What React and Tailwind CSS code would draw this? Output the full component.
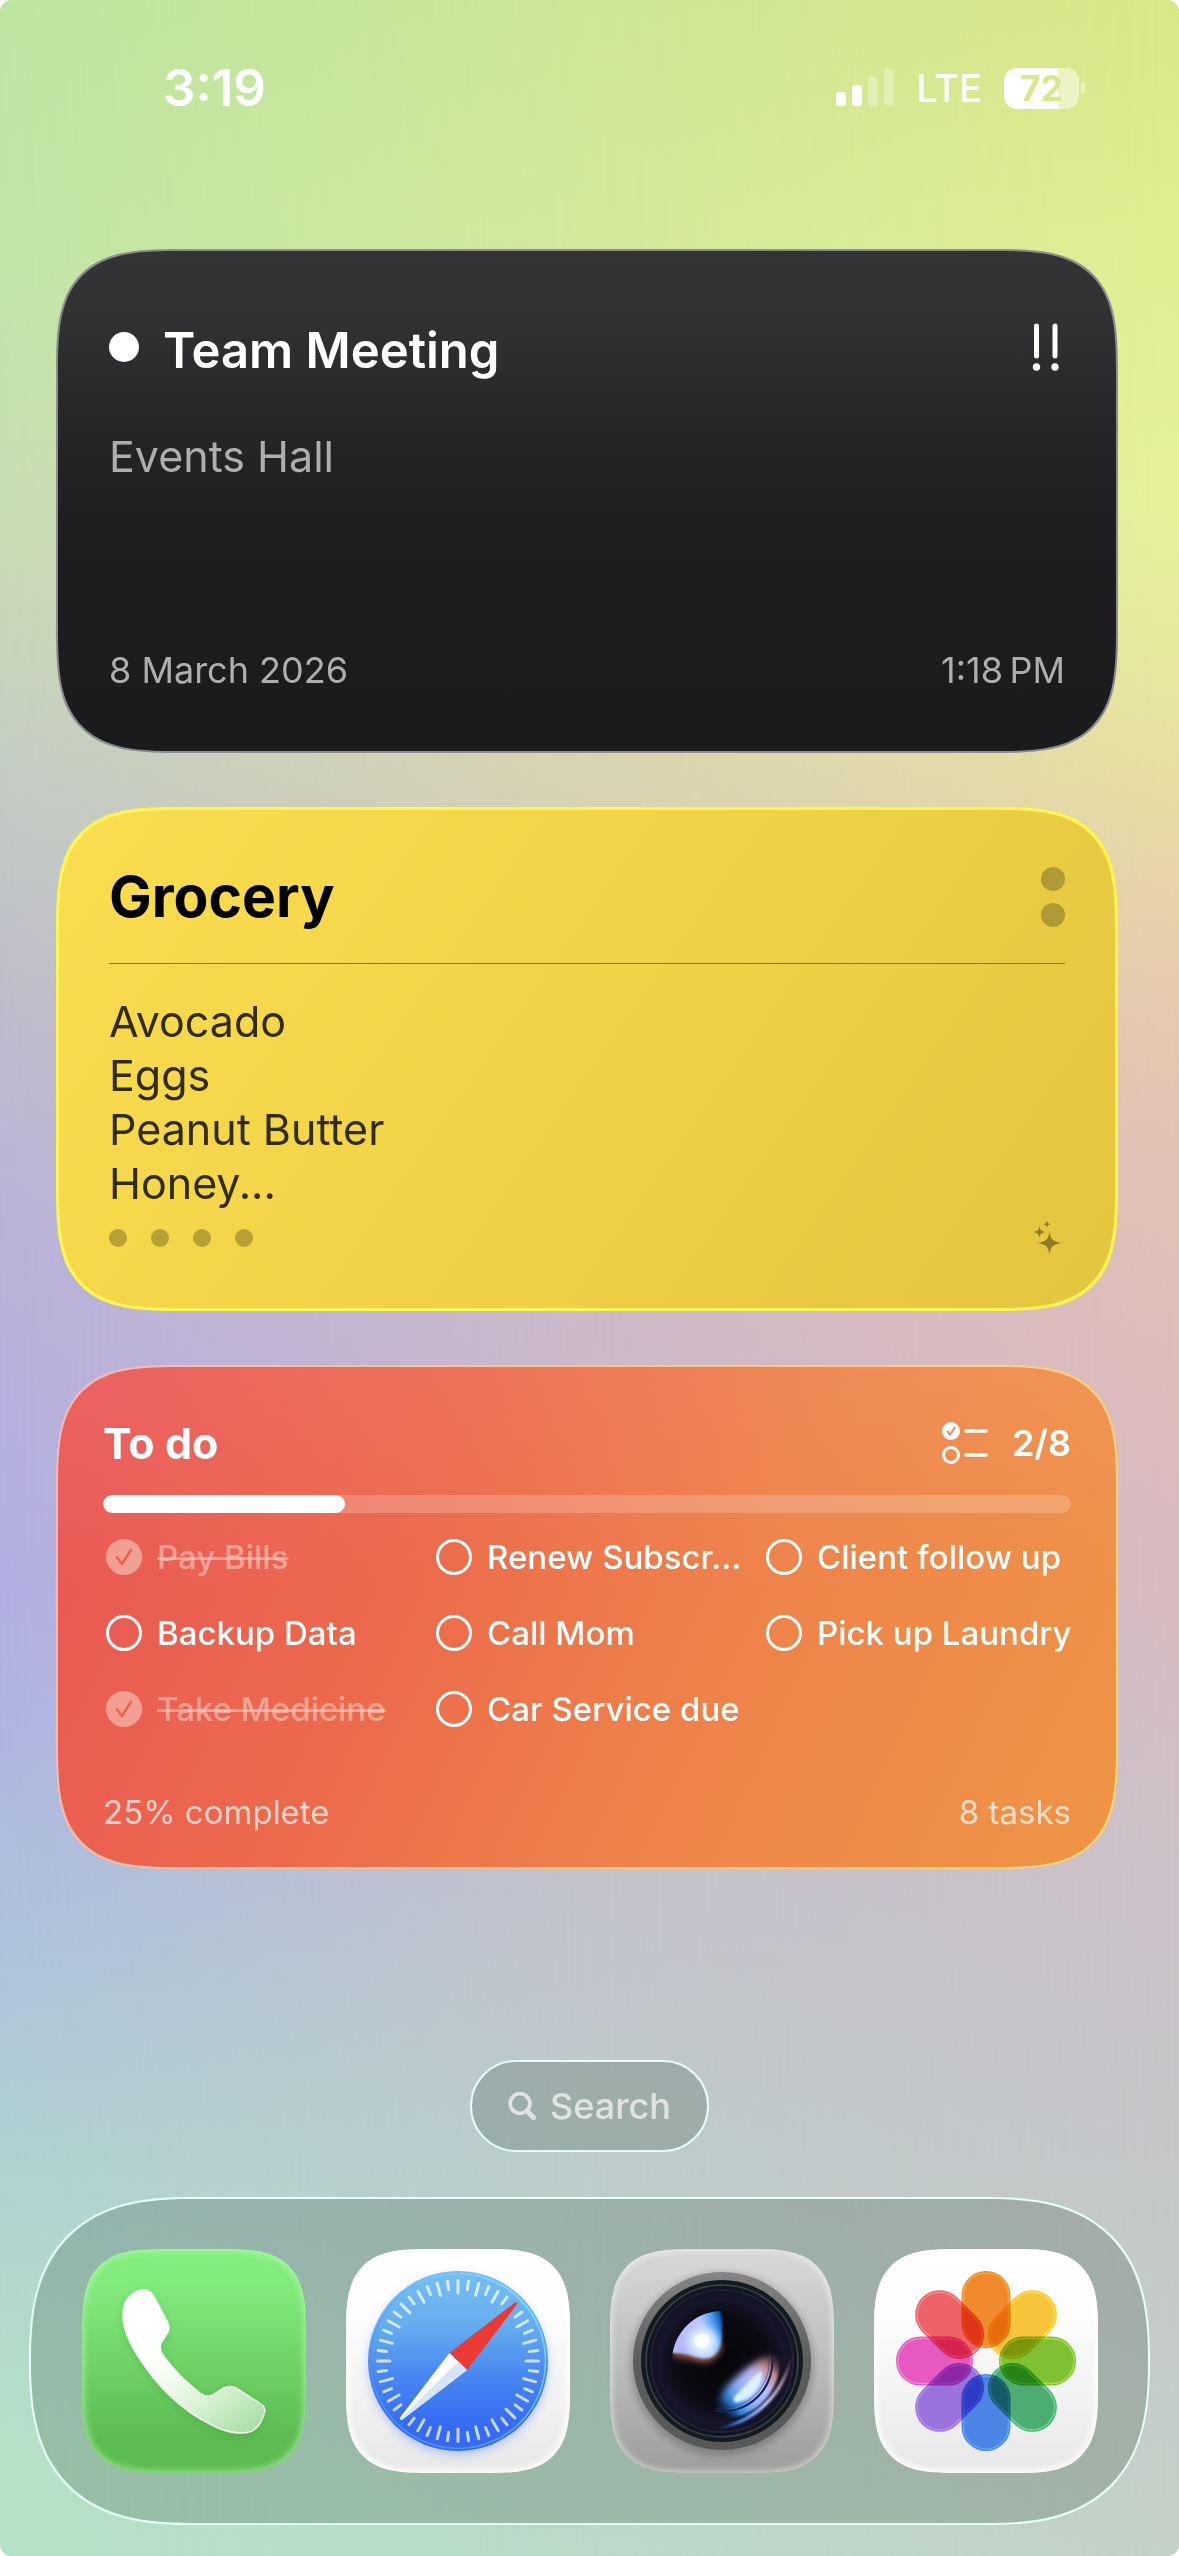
import { useState } from "react";
import clsx from "clsx";

const TASKS = [
  { id: 1, title: "Pay Bills", done: true },
  { id: 2, title: "Renew Subscr...", done: false },
  { id: 3, title: "Client follow up", done: false },
  { id: 4, title: "Backup Data", done: false },
  { id: 5, title: "Call Mom", done: false },
  { id: 6, title: "Pick up Laundry", done: false },
  { id: 7, title: "Take Medicine", done: true },
  { id: 8, title: "Car Service due", done: false },
];

const GROCERIES = ["Avocado", "Eggs", "Peanut Butter", "Honey..."];

const PETALS = [
  { angle: 0, fill: "#F08A2C", edge: "#F5A93F" },
  { angle: 45, fill: "#F6C53B", edge: "#FFE03A" },
  { angle: 90, fill: "#7FC133", edge: "#A2E044" },
  { angle: 135, fill: "#4DAC72", edge: "#6FD79B" },
  { angle: 180, fill: "#4A85E6", edge: "#5FA2F5" },
  { angle: 225, fill: "#9A72DC", edge: "#B58CF0" },
  { angle: 270, fill: "#E65ABF", edge: "#F083D6" },
  { angle: 315, fill: "#EE6266", edge: "#F58A90" },
];

const TICKS = Array.from({ length: 48 }, (_, i) => i).filter(
  (i) => i !== 6 && i !== 30
);

function Wallpaper() {
  return (
    <div className="absolute inset-0 -z-10" aria-hidden="true">
      <div className="absolute inset-0 bg-[linear-gradient(180deg,#cde796_0%,#d3ea9b_9%,#dbe6a2_18%,#d9d4b2_30%,#d4c5bd_42%,#cdb9c9_52%,#c8bccb_63%,#c3c3cc_74%,#bdcdcb_85%,#bbdbc8_100%)]" />
      <div className="absolute inset-0 bg-[linear-gradient(180deg,#bde4a2_0%,#c1e5a7_10%,#c5e0ae_16%,#c8d8b8_23%,#c3cdc3_30%,#bebccb_39%,#bab3d7_47%,#b6b0dd_54%,#b0aee1_62%,#aeb6e0_68%,#adc1dc_75%,#b0d2d1_85%,#b5e1c6_96%,#b5e1c6_100%)] [mask-image:linear-gradient(90deg,#000_0%,transparent_50%)]" />
      <div className="absolute inset-0 bg-[linear-gradient(180deg,#dae789_0%,#e1ee92_10%,#e6f199_20%,#e7ea9d_25%,#e8dca4_31%,#e6ccac_38%,#e3c1b5_45%,#dfbcba_53%,#d8babf_61%,#ccc1c8_73%,#c5c6c8_84%,#c4d1c8_100%)] [mask-image:linear-gradient(90deg,transparent_50%,#000_100%)]" />
    </div>
  );
}

function StatusBar() {
  return (
    <header className="flex items-center justify-between pt-15 pr-[94px] pl-[163px] text-white">
      <time className="text-[51px] leading-14 font-semibold">3:19</time>
      <div className="flex items-center gap-[22px]">
        <svg width="58" height="38" viewBox="0 0 58 38" fill="#fff" role="img" aria-label="Signal">
          <rect x="0" y="23" width="10" height="14" rx="3" />
          <rect x="16" y="16" width="10" height="21" rx="3" />
          <rect x="32" y="8" width="10" height="29" rx="3" opacity="0.3" />
          <rect x="48" y="0" width="10" height="37" rx="3" opacity="0.3" />
        </svg>
        <span className="text-[38px] leading-12 font-medium">LTE</span>
        <div className="flex items-center gap-[2px]">
          <div className="flex h-[41px] w-[75px] items-center justify-center overflow-hidden rounded-[13px] bg-[linear-gradient(90deg,#fff_72%,#edf3c4_72%)]">
            <span className="text-[35px] leading-10 font-bold text-[#d8e68c]">72</span>
          </div>
          <div className="h-3 w-1 rounded-r-full bg-[#edf3c4]" />
        </div>
      </div>
    </header>
  );
}

function EventWidget() {
  return (
    <article className="flex min-h-[504px] flex-col rounded-[126px] border-2 border-[#8d8d90] bg-[linear-gradient(180deg,#343436_0%,#323234_12%,#262628_35%,#1e1e20_55%,#1b1b1d_100%)] px-[51px] pt-[70px] pb-[59px] [corner-shape:superellipse(1.65)]">
      <div className="flex items-center justify-between">
        <div className="flex items-center gap-6">
          <span className="mb-2 size-[30px] rounded-full bg-white" />
          <h2 className="text-[49px] leading-15 font-semibold text-white">Team Meeting</h2>
        </div>
        <svg
          className="mb-2"
          width="36"
          height="50"
          viewBox="0 0 36 50"
          role="img"
          aria-label="High priority"
        >
          <g stroke="#fff" strokeWidth="5" strokeLinecap="round">
            <path d="M7.500 4V34M26 4V34" />
          </g>
          <circle cx="7.500" cy="45" r="3.700" fill="#fff" />
          <circle cx="26" cy="45" r="3.700" fill="#fff" />
        </svg>
      </div>
      <p className="mt-12 text-[43px] leading-[54px] text-[#aeaeae]">Events Hall</p>
      <div className="mt-auto flex justify-between text-[36px] leading-11 text-[#aeaeae]">
        <span>8 March 2026</span>
        <time>1:18{"\u202f"}PM</time>
      </div>
    </article>
  );
}

function NotesWidget() {
  return (
    <article className="flex min-h-[504px] flex-col rounded-[126px] border-3 border-[#fdf651] bg-[linear-gradient(125deg,#fade50_0%,#efd245_50%,#e3c53f_100%)] px-[50px] pt-[51px] pb-[52px] [corner-shape:superellipse(1.65)]">
      <div className="flex items-center justify-between">
        <h2 className="text-[57px] leading-18 font-bold text-black">Grocery</h2>
        <div className="flex flex-col gap-3">
          <span className="size-6 rounded-full bg-[#b09a35]" />
          <span className="size-6 rounded-full bg-[#b09a35]" />
        </div>
      </div>
      <hr className="mt-[30px] border-t border-[#7b7341]" />
      <ul className="mt-[30px] text-[43px] leading-[54px] text-[#322b0a]">
        {GROCERIES.map((item) => (
          <li key={item}>{item}</li>
        ))}
      </ul>
      <div className="mt-auto flex h-9 items-center justify-between">
        <div className="flex gap-6">
          {[0, 1, 2, 3].map((dot) => (
            <span key={dot} className="size-[18px] rounded-full bg-[#b8a033]" />
          ))}
        </div>
        <svg width="32" height="36" viewBox="0 0 32 36" fill="#8d7a26" aria-hidden="true">
          <path d="M16.500 11C17.500 19 19.500 21.500 28.500 23C19.500 24.500 17.500 27 16.500 35C15.500 27 13.500 24.500 4.500 23C13.500 21.500 15.500 19 16.500 11Z" />
          <path d="M6.500 6C7 10 8 11 12.500 12C8 13 7 14 6.500 18C6 14 5 13 0.500 12C5 11 6 10 6.500 6Z" />
          <path d="M14 0.500C14.300 3 15 3.700 17.800 4.200C15 4.700 14.300 5.400 14 8C13.700 5.400 13 4.700 10.200 4.200C13 3.700 13.700 3 14 0.500Z" />
        </svg>
      </div>
    </article>
  );
}

function TaskItem({ task, onToggle }) {
  return (
    <li>
      <label
        className={clsx(
          "flex items-center gap-[15px] pl-[3px] text-[33px] leading-9 font-medium whitespace-nowrap",
          task.done ? "text-white/40 line-through decoration-3" : "text-white"
        )}
      >
        <span className="grid shrink-0 place-items-center">
          <input
            type="checkbox"
            checked={task.done}
            onChange={() => onToggle(task.id)}
            className="col-start-1 row-start-1 size-9 appearance-none rounded-full border-3 border-white checked:border-transparent checked:bg-[#f29f92] checked:bg-origin-border"
          />
          {task.done && (
            <svg
              className="pointer-events-none col-start-1 row-start-1"
              width="18"
              height="18"
              viewBox="0 0 18 18"
              fill="none"
              stroke="#ea6353"
              strokeWidth="2.600"
              strokeLinecap="round"
              strokeLinejoin="round"
            >
              <path d="M2 9.500L7 16L16 2" />
            </svg>
          )}
        </span>
        <span>{task.title}</span>
      </label>
    </li>
  );
}

function TodoWidget() {
  const [tasks, setTasks] = useState(TASKS);
  const done = tasks.filter((t) => t.done).length;
  const percent = Math.round((done / tasks.length) * 100);

  const toggle = (id) =>
    setTasks((prev) => prev.map((t) => (t.id === id ? { ...t, done: !t.done } : t)));

  return (
    <article className="flex min-h-[504px] flex-col rounded-[126px] border-2 border-transparent [background:linear-gradient(180deg,rgba(255,255,255,0.07),transparent_45%)_padding-box,linear-gradient(115deg,#ea5855_5%,#ec6a4b_35%,#ee834a_62%,#ef9545_100%)_padding-box,linear-gradient(110deg,#f6b9b8,#f8c68c_50%,#fbd878)_border-box] px-[45px] pt-[50px] pb-[35px] [corner-shape:superellipse(1.65)]">
      <div className="flex items-center justify-between text-white">
        <h2 className="text-[43px] leading-13 font-bold">To do</h2>
        <div className="flex items-center gap-6">
          <svg width="46" height="42" viewBox="0 0 46 42" fill="none" aria-hidden="true">
            <circle cx="9" cy="9" r="9" fill="#fff" />
            <path
              d="M5.500 9.500L8 12.800L12.800 5.500"
              stroke="#EF8E57"
              strokeWidth="2"
              strokeLinecap="round"
              strokeLinejoin="round"
            />
            <circle cx="9" cy="33" r="7.500" stroke="#fff" strokeWidth="3" />
            <path d="M24 9H44M24 33H44" stroke="#fff" strokeWidth="3.400" strokeLinecap="round" />
          </svg>
          <span className="text-[36px] leading-11 font-semibold">
            {done}/{tasks.length}
          </span>
        </div>
      </div>

      <div
        role="progressbar"
        aria-label="Tasks done"
        aria-valuenow={percent}
        className="mt-[26px] h-[18px] overflow-hidden rounded-full bg-white/20"
      >
        <div className="h-full rounded-full bg-white" style={{ width: `${percent}%` }} />
      </div>

      <ul className="mt-[26px] grid grid-cols-3 gap-x-[22px] gap-y-10">
        {tasks.map((task) => (
          <TaskItem key={task.id} task={task} onToggle={toggle} />
        ))}
      </ul>

      <div className="mt-auto flex justify-between text-[33px] leading-10 text-white/70">
        <span>{percent}% complete</span>
        <span>{tasks.length} tasks</span>
      </div>
    </article>
  );
}

function PhoneIcon() {
  return (
    <svg viewBox="0 0 224 224" className="size-full" aria-hidden="true">
      <defs>
        <linearGradient id="handset" x1="0.200" y1="0.100" x2="0.900" y2="1">
          <stop offset="0" stopColor="#fff" />
          <stop offset="0.350" stopColor="#fbfff9" />
          <stop offset="0.650" stopColor="#dcf3d8" />
          <stop offset="1" stopColor="#a9dfa4" />
        </linearGradient>
        <filter id="handsetShadow" x="-20%" y="-20%" width="140%" height="140%">
          <feDropShadow dx="0" dy="3" stdDeviation="4" floodColor="#2f8a2c" floodOpacity="0.25" />
        </filter>
      </defs>
      <path
        d="M68 43C64 39 56 41 50 45C43 50 41 58 41 66C41 80 48 96 60 113C75 136 99 161 128 175C139 181 149 184 159 184C170 184 175 180 179 173L182 165C184 161 182 157 179 155L154 139C150 137 146 137 142 139L131 146C127 148 122 147 118 144C106 135 92 121 83 109C78 103 77 99 79 94L86 83C88 79 87 76 85 72L72 48C70 45 69 44 68 43Z"
        fill="url(#handset)"
        stroke="#f4fff2"
        strokeWidth="1.500"
        filter="url(#handsetShadow)"
      />
    </svg>
  );
}

function SafariIcon() {
  return (
    <svg viewBox="0 0 224 224" className="size-full" aria-hidden="true">
      <defs>
        <linearGradient id="dial" x1="0" y1="0" x2="0" y2="1">
          <stop offset="0" stopColor="#76BFF0" />
          <stop offset="0.300" stopColor="#65ADEF" />
          <stop offset="0.600" stopColor="#4685F1" />
          <stop offset="0.850" stopColor="#356CF3" />
          <stop offset="1" stopColor="#3468F0" />
        </linearGradient>
        <linearGradient id="dialEdge" x1="1" y1="0" x2="0.300" y2="0.800">
          <stop offset="0" stopColor="#86F0FF" />
          <stop offset="1" stopColor="#4C8FF2" />
        </linearGradient>
        <filter id="dialShadow" x="-20%" y="-20%" width="140%" height="140%">
          <feDropShadow dx="0" dy="4" stdDeviation="4" floodColor="#3468F0" floodOpacity="0.300" />
        </filter>
      </defs>
      <circle cx="112" cy="112" r="90" fill="url(#dial)" filter="url(#dialShadow)" />
      <circle cx="112" cy="112" r="87.500" fill="none" stroke="url(#dialEdge)" strokeWidth="1.600" />
      <g stroke="#fff" strokeOpacity="0.720" strokeWidth="3" strokeLinecap="round">
        {TICKS.map((i) => (
          <line
            key={i}
            x1="112"
            y1="31.500"
            x2="112"
            y2={i % 2 === 0 ? 44 : 40}
            transform={`rotate(${i * 7.5} 112 112)`}
          />
        ))}
      </g>
      <path d="M169 53.500Q171.500 52.500 171 55.500L121 121L103.500 104Z" fill="#EB3934" />
      <path d="M103.500 104L121 121L56.500 170.500Q53 171.500 54 168.500Z" fill="#fff" />
      <path d="M121 121L56.500 170.500Q55 171 54.500 170L112 112.500Z" fill="#D5E5FA" />
    </svg>
  );
}

function CameraIcon() {
  return (
    <svg viewBox="0 0 224 224" className="size-full" aria-hidden="true">
      <defs>
        <linearGradient id="bezel" x1="0" y1="0" x2="0" y2="1">
          <stop offset="0" stopColor="#858585" />
          <stop offset="0.500" stopColor="#5b5d5b" />
          <stop offset="1" stopColor="#585858" />
        </linearGradient>
        <radialGradient id="lens" cx="0.500" cy="0.500" r="0.500">
          <stop offset="0" stopColor="#050508" />
          <stop offset="0.600" stopColor="#0a0a12" />
          <stop offset="0.850" stopColor="#16152b" />
          <stop offset="1" stopColor="#12121c" />
        </radialGradient>
        <linearGradient id="glint" gradientUnits="userSpaceOnUse" x1="66" y1="92" x2="114" y2="78">
          <stop offset="0" stopColor="#b4b8fa" />
          <stop offset="0.600" stopColor="#b9c6ff" />
          <stop offset="0.820" stopColor="#4c9cf4" />
          <stop offset="1" stopColor="#0751b0" />
        </linearGradient>
        <linearGradient id="flare" gradientUnits="userSpaceOnUse" x1="168" y1="106" x2="108" y2="160">
          <stop offset="0" stopColor="#7a4038" stopOpacity="0" />
          <stop offset="0.200" stopColor="#c58d88" />
          <stop offset="0.380" stopColor="#b9bcfb" />
          <stop offset="0.620" stopColor="#94b4fb" />
          <stop offset="0.820" stopColor="#2f86e4" />
          <stop offset="1" stopColor="#07408f" stopOpacity="0" />
        </linearGradient>
        <linearGradient id="rim" gradientUnits="userSpaceOnUse" x1="184" y1="104" x2="104" y2="184">
          <stop offset="0" stopColor="#8a5f68" stopOpacity="0" />
          <stop offset="0.250" stopColor="#b48e9c" />
          <stop offset="0.500" stopColor="#c3ccff" />
          <stop offset="0.800" stopColor="#3a7de0" />
          <stop offset="1" stopColor="#0a3a96" stopOpacity="0" />
        </linearGradient>
        <filter id="soft1" x="-30%" y="-30%" width="160%" height="160%">
          <feGaussianBlur stdDeviation="1.200" />
        </filter>
        <filter id="soft3" x="-40%" y="-40%" width="180%" height="180%">
          <feGaussianBlur stdDeviation="3.500" />
        </filter>
        <clipPath id="innerLens">
          <circle cx="112" cy="112" r="50" />
        </clipPath>
      </defs>
      <circle cx="112" cy="115" r="92" fill="#000" opacity="0.200" filter="url(#soft3)" />
      <circle cx="112" cy="112" r="89" fill="url(#bezel)" />
      <circle cx="112" cy="112" r="81" fill="#141b20" />
      <circle cx="112" cy="112" r="76" fill="none" stroke="#3f444c" strokeWidth="1.500" />
      <circle cx="112" cy="112" r="74" fill="url(#lens)" />
      <circle cx="112" cy="112" r="71" fill="none" stroke="#211f3a" strokeWidth="2" />

      <g clipPath="url(#innerLens)">
        <path
          d="M62 98C60 112 74 108 86 112C98 116 108 112 112 96L90 84Z"
          fill="#b0664c"
          opacity="0.800"
          filter="url(#soft3)"
        />
        <path
          d="M58 102C60 70 84 54 106 58C114 62 112 76 112 88C111 102 104 109 96 109C84 109 78 103 58 104Z"
          fill="url(#glint)"
          filter="url(#soft1)"
        />
        <ellipse cx="93" cy="93" rx="15" ry="14" fill="#d6ecff" filter="url(#soft3)" />
        <path
          d="M166 104C150 110 138 117 130 125C117 137 108 143 106 168L168 168Z"
          fill="url(#flare)"
          filter="url(#soft3)"
        />
        <path
          d="M152 122C146 124 138 134 128 144C122 149 122 154 128 153C142 150 152 138 152 122Z"
          fill="#d9f1ff"
          filter="url(#soft1)"
        />
      </g>
      <circle cx="92" cy="92" r="7.500" fill="#fff" filter="url(#soft1)" />
      <circle cx="92" cy="92" r="6.500" fill="#fff" />

      <path
        d="M165 105A53.500 53.500 0 0 1 105 165"
        fill="none"
        stroke="url(#flare)"
        strokeWidth="9"
        filter="url(#soft1)"
      />
      <path d="M162 106A50 50 0 0 1 106 162" fill="none" stroke="#1a2350" strokeWidth="2" />
      <path d="M159 107A47 47 0 0 1 107 159" fill="none" stroke="#2c3f86" strokeOpacity="0.600" strokeWidth="1" />
      <path
        d="M183 98C181 142 146 179 100 181C142 172 174 146 183 98Z"
        fill="url(#rim)"
        filter="url(#soft1)"
      />
    </svg>
  );
}

function PhotosIcon() {
  return (
    <svg viewBox="0 0 224 224" className="size-full" aria-hidden="true">
      <g className="isolate">
        {PETALS.map(({ angle, fill, edge }) => (
          <g key={angle} transform={`rotate(${angle} 112 112)`} className="mix-blend-multiply">
            <rect x="87.500" y="22" width="49" height="77" rx="24.500" fill={fill} />
            <rect
              x="89.500"
              y="24"
              width="45"
              height="73"
              rx="22.500"
              fill="none"
              stroke={edge}
              strokeWidth="1.500"
            />
          </g>
        ))}
      </g>
    </svg>
  );
}

const DOCK = [
  {
    name: "Phone",
    icon: PhoneIcon,
    tile: "bg-[linear-gradient(180deg,#84ef80_0%,#82ea7c_18%,#5cbb51_85%,#5cbb51_100%)] shadow-[inset_0_0_7px_2px_rgba(190,255,185,0.6)]",
  },
  {
    name: "Safari",
    icon: SafariIcon,
    tile: "bg-[linear-gradient(180deg,#fff_0%,#fdfdfd_30%,#e9e9e9_95%)] shadow-[inset_0_0_6px_3px_rgba(255,255,255,0.9)]",
  },
  {
    name: "Camera",
    icon: CameraIcon,
    tile: "bg-[linear-gradient(180deg,#d6d6d6_5%,#bdbdbd_50%,#a0a0a0_95%)] shadow-[inset_0_0_6px_2px_rgba(255,255,255,0.5)]",
  },
  {
    name: "Photos",
    icon: PhotosIcon,
    tile: "bg-[linear-gradient(180deg,#fff_0%,#fdfdfd_30%,#e9e9e9_95%)] shadow-[inset_0_0_6px_3px_rgba(255,255,255,0.9)]",
  },
];

export default function App() {
  return (
    <div className="relative isolate flex min-h-screen flex-col overflow-hidden rounded-xl font-['Inter','Liberation_Sans',sans-serif]">
      <Wallpaper />
      <StatusBar />

      <main className="mt-[133px] mr-[61px] ml-14 flex flex-col gap-[54px]">
        <EventWidget />
        <NotesWidget />
        <TodoWidget />
      </main>

      <footer className="mt-auto flex flex-col items-center gap-[45px] px-[29px] pt-10 pb-[31px]">
        <button
          type="button"
          className="flex h-23 items-center gap-[14px] rounded-full border-2 border-[#e6fafa] bg-[#001e0a]/17 px-9 text-[36px] leading-11 font-medium text-[#dfe3e4]"
        >
          <svg width="28" height="28" viewBox="0 0 28 28" fill="none" stroke="#dfe3e4" aria-hidden="true">
            <circle cx="12" cy="11.500" r="9.800" strokeWidth="3.800" />
            <path d="M19 19L25.500 25.500" strokeWidth="5" strokeLinecap="round" />
          </svg>
          Search
        </button>

        {/* Dock */}
        <nav
          aria-label="Dock"
          className="flex w-full justify-center gap-10 rounded-[164px] border-2 border-[#e6fff8] bg-[#001e0a]/17 py-[50px] [corner-shape:superellipse(1.38)]"
        >
          {DOCK.map(({ name, icon: Icon, tile }) => (
            <button
              key={name}
              type="button"
              aria-label={name}
              className={clsx(
                "size-56 overflow-hidden rounded-[85px] [corner-shape:superellipse(1.63)]",
                tile
              )}
            >
              <Icon />
            </button>
          ))}
        </nav>
      </footer>
    </div>
  );
}
